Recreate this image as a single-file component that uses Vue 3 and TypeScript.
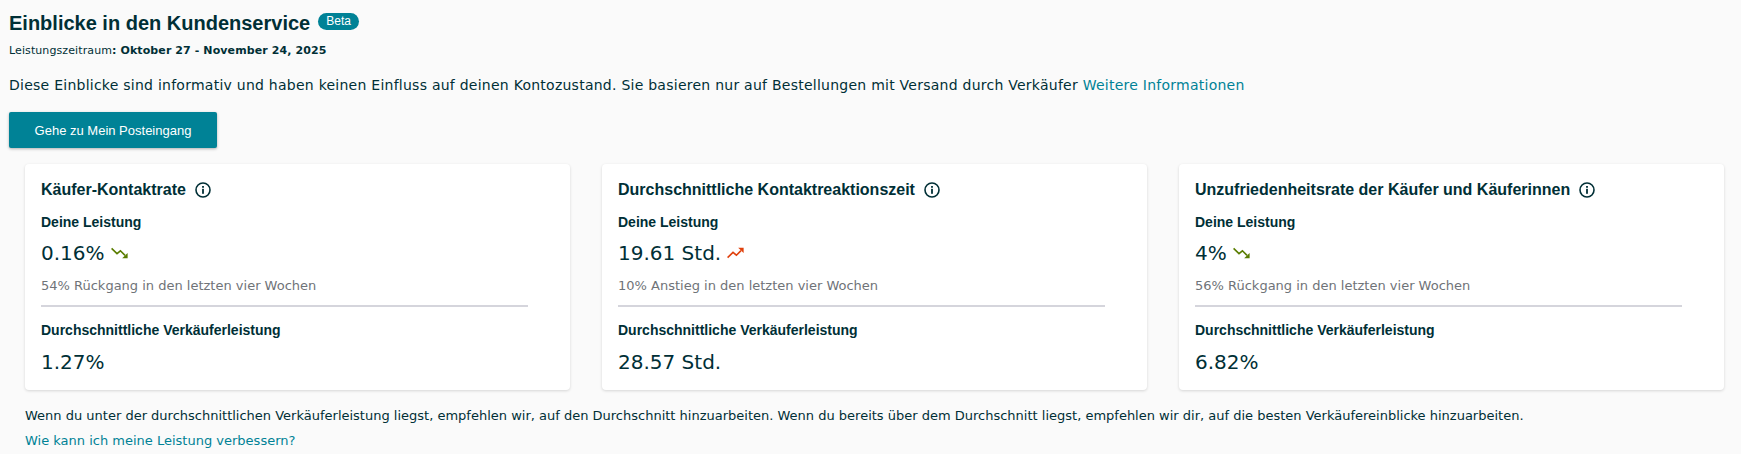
<template>
  <div class="page">
    <div class="title-row">
      <h1 class="title">Einblicke in den Kundenservice</h1>
      <span class="beta">Beta</span>
    </div>
    <div class="period">
      <span class="period-label">Leistungszeitraum</span><b>: Oktober 27 - November 24, 2025</b>
    </div>
    <p class="intro">
      Diese Einblicke sind informativ und haben keinen Einfluss auf deinen Kontozustand. Sie basieren nur auf Bestellungen mit Versand durch Verkäufer
      <a class="link">Weitere Informationen</a>
    </p>
    <button class="inbox-btn">Gehe zu Mein Posteingang</button>

    <div class="section">
      <div class="cards">
        <div v-for="card in cards" :key="card.title" class="card">
          <div class="card-title">
            <span>{{ card.title }}</span>
            <svg class="info" width="16" height="16" viewBox="0 0 16 16" fill="none">
              <circle cx="8" cy="8" r="7" stroke="#002f36" stroke-width="1.6"/>
              <rect x="7.1" y="6.8" width="1.8" height="5" fill="#002f36"/>
              <rect x="7.1" y="4" width="1.8" height="1.8" fill="#002f36"/>
            </svg>
          </div>
          <div class="label">Deine Leistung</div>
          <div class="value">
            <span>{{ card.value }}</span>
            <svg v-if="card.trend === 'down'" class="trend" width="18" height="12" viewBox="0 0 18 12" fill="none">
              <path d="M0.6 1.4L6 6.6L9.4 3.8L14 8.4" stroke="#5a7d00" stroke-width="1.6"/>
              <path d="M16.6 6V11.2H11.2Z" fill="#5a7d00"/>
            </svg>
            <svg v-else class="trend" width="18" height="12" viewBox="0 0 18 12" fill="none">
              <path d="M0.6 10.6L6 5.4L9.4 8.2L14 3.6" stroke="#e0400c" stroke-width="1.6"/>
              <path d="M16.6 6V0.8H11.2Z" fill="#e0400c"/>
            </svg>
          </div>
          <div class="change">{{ card.change }}</div>
          <div class="divider"></div>
          <div class="label avg-label">Durchschnittliche Verkäuferleistung</div>
          <div class="value avg">{{ card.average }}</div>
        </div>
      </div>
      <p class="note">
        Wenn du unter der durchschnittlichen Verkäuferleistung liegst, empfehlen wir, auf den Durchschnitt hinzuarbeiten. Wenn du bereits über dem Durchschnitt liegst, empfehlen wir dir, auf die besten Verkäufereinblicke hinzuarbeiten.
      </p>
      <a class="link improve">Wie kann ich meine Leistung verbessern?</a>
    </div>
  </div>
</template>

<script setup lang="ts">
interface Card {
  title: string;
  value: string;
  trend: 'up' | 'down';
  change: string;
  average: string;
}

const cards: Card[] = [
  {
    title: 'Käufer-Kontaktrate',
    value: '0.16%',
    trend: 'down',
    change: '54% Rückgang in den letzten vier Wochen',
    average: '1.27%'
  },
  {
    title: 'Durchschnittliche Kontaktreaktionszeit',
    value: '19.61 Std.',
    trend: 'up',
    change: '10% Anstieg in den letzten vier Wochen',
    average: '28.57 Std.'
  },
  {
    title: 'Unzufriedenheitsrate der Käufer und Käuferinnen',
    value: '4%',
    trend: 'down',
    change: '56% Rückgang in den letzten vier Wochen',
    average: '6.82%'
  }
];
</script>

<style>
html,
body {
  margin: 0;
  background: #fafafa;
}
</style>

<style scoped>
.page {
  height: 454px;
  overflow: hidden;
  box-sizing: border-box;
  padding: 12px 9px 0;
  background: #fafafa;
  color: #002f36;
  font-family: "DejaVu Sans", sans-serif;
}

.title-row {
  display: flex;
  align-items: center;
  gap: 8px;
  height: 22px;
}

.title {
  margin: 0;
  font: bold 20px/22px "Liberation Sans", Arial, sans-serif;
}

.beta {
  padding: 0 8px;
  height: 17px;
  margin-bottom: 3px;
  border-radius: 9px;
  background: #008296;
  color: #fff;
  font: 12px/17px "Liberation Sans", Arial, sans-serif;
}

.period {
  margin-top: 10px;
  font-size: 11px;
  line-height: 14px;
  letter-spacing: 0.1px;
}

.intro {
  margin: 18px 0 0;
  font-size: 14px;
  line-height: 18px;
  letter-spacing: 0.25px;
}

.link {
  color: #008296;
  cursor: pointer;
}

.inbox-btn {
  display: block;
  width: 208px;
  height: 36px;
  margin-top: 18px;
  padding: 0;
  border: none;
  border-radius: 2px;
  background: #008296;
  box-shadow: 0 1px 3px rgba(0, 0, 0, 0.3);
  color: #fff;
  font: 13px "Liberation Sans", Arial, sans-serif;
}

.section {
  padding: 16px 17px 0 16px;
}

.cards {
  display: grid;
  grid-template-columns: repeat(3, 545px);
  gap: 32px;
}

.card {
  height: 226px;
  box-sizing: border-box;
  padding: 16px 16px 0;
  border-radius: 4px;
  background: #fff;
  box-shadow: 0 1px 3px rgba(0, 0, 0, 0.15);
}

.card-title {
  display: flex;
  align-items: center;
  gap: 9px;
  height: 20px;
  font: bold 16px/20px "Liberation Sans", Arial, sans-serif;
}

.label {
  margin-top: 13px;
  font: bold 14px/18px "Liberation Sans", Arial, sans-serif;
}

.avg-label {
  margin-top: 14px;
}

.value {
  display: flex;
  align-items: center;
  gap: 6px;
  margin-top: 10px;
  font-size: 20px;
  line-height: 24px;
}

.avg {
  margin-top: 11px;
}

.change {
  margin-top: 13px;
  color: #6f7378;
  font-size: 13px;
  line-height: 16px;
}

.divider {
  width: 487px;
  height: 2px;
  margin-top: 11px;
  background: #d5d5dc;
}

.note {
  margin: 18px 0 0;
  font-size: 13px;
  line-height: 16px;
}

.improve {
  display: block;
  margin-top: 9px;
  font-size: 13px;
  line-height: 16px;
}
</style>
